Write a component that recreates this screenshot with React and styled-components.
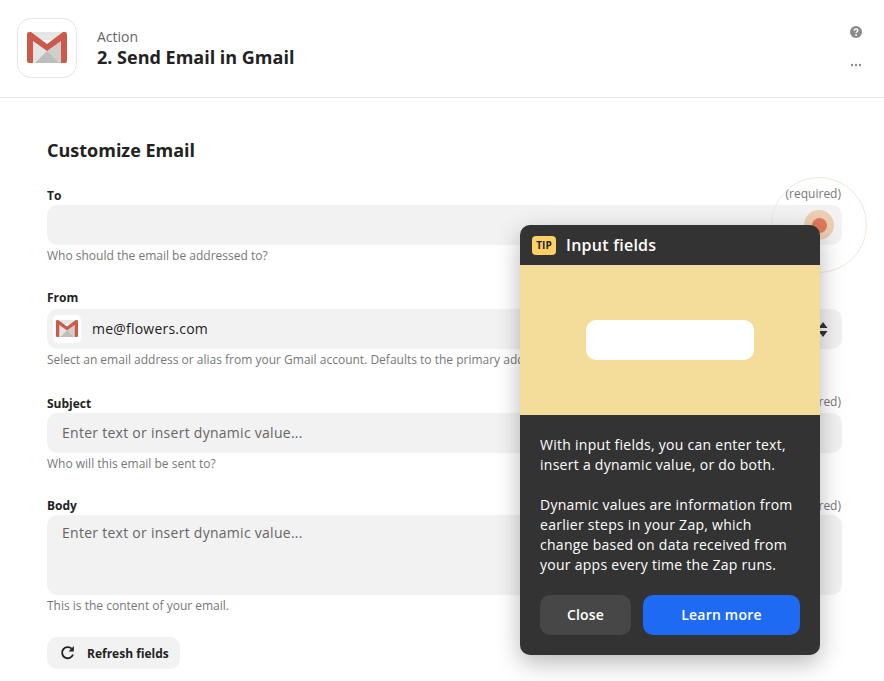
import React from "react";
import styled, { createGlobalStyle } from "styled-components";

const GlobalStyle = createGlobalStyle`
  html, body {
    margin: 0;
    padding: 0;
    background: #fff;
    font-family: "Open Sans", "Liberation Sans", sans-serif;
    overflow: hidden;
  }
`;

const Page = styled.div`
  position: relative;
  width: 884px;
  height: 681px;
  overflow: hidden;
  background: #fff;
`;

const Header = styled.header`
  display: flex;
  align-items: center;
  height: 98px;
  padding: 0 22px 2px 17px;
  box-sizing: border-box;
  border-bottom: 1px solid #e3e3e3;
`;

const AppIcon = styled.div`
  display: flex;
  align-items: center;
  justify-content: center;
  width: ${(p) => p.$size}px;
  height: ${(p) => p.$size}px;
  flex: none;
  box-sizing: border-box;
  background: #fff;
  border: 1px solid ${(p) => (p.$plain ? "#f3f3f3" : "#e6e6e6")};
  border-radius: ${(p) => p.$radius}px;
`;

const HeaderText = styled.div`
  display: flex;
  flex-direction: column;
  margin: -2px 0 0 20px;
  flex: 1;
`;

const Kicker = styled.div`
  font-size: 14px;
  line-height: 20px;
  color: #666;
`;

const StepTitle = styled.div`
  font-size: 18px;
  line-height: 20px;
  font-weight: 700;
  color: #222;
`;

const HeaderActions = styled.div`
  display: flex;
  flex-direction: column;
  align-items: center;
  gap: 25px;
  margin-top: -3px;
`;

const Form = styled.main`
  display: flex;
  flex-direction: column;
  padding: 40px 42px 0 47px;
`;

const SectionTitle = styled.h2`
  margin: 0 0 25px;
  font-size: 18px;
  line-height: 24px;
  font-weight: 700;
  color: #222;
`;

const Field = styled.div`
  display: flex;
  flex-direction: column;
  margin-bottom: ${(p) => p.$gap}px;
`;

const LabelRow = styled.div`
  display: flex;
  justify-content: space-between;
  align-items: center;
  height: 18px;
  margin-bottom: ${(p) => p.$gap || 0}px;
`;

const Label = styled.label`
  font-size: 12px;
  line-height: 18px;
  font-weight: 700;
  color: #222;
`;

const Required = styled.span`
  margin: ${(p) => (p.$low ? "-1px" : "-4px")} 1px 0 0;
  font-size: 12px;
  line-height: 18px;
  color: #777;
`;

const Input = styled.div`
  display: flex;
  align-items: ${(p) => (p.$tall ? "flex-start" : "center")};
  justify-content: space-between;
  box-sizing: border-box;
  height: ${(p) => (p.$tall ? 80 : 40)}px;
  padding: ${(p) => (p.$tall ? "8px 15px" : "0 15px")};
  padding-left: ${(p) => (p.$select ? 5 : 15)}px;
  padding-right: ${(p) => (p.$select ? 14 : 15)}px;
  background: #f2f2f2;
  border-radius: 10px;
`;

const Placeholder = styled.span`
  font-size: 14px;
  line-height: 20px;
  letter-spacing: 0.27px;
  color: #666;
`;

const SelectValue = styled.div`
  display: flex;
  align-items: center;
  gap: 10px;
  font-size: 14px;
  line-height: 20px;
  letter-spacing: 0.22px;
  color: #222;
`;

const Help = styled.div`
  margin-top: 2px;
  font-size: 12px;
  line-height: 18px;
  color: #777;
`;

const RefreshButton = styled.button`
  display: flex;
  align-items: center;
  gap: 11px;
  width: 133px;
  height: 32px;
  padding: 0 0 0 13px;
  border: 0;
  border-radius: 10px;
  background: #f2f2f2;
  font-family: inherit;
  font-size: 12px;
  font-weight: 700;
  color: #222;
`;

const Pulse = styled.div`
  position: absolute;
  left: 771px;
  top: 177px;
  width: 96px;
  height: 96px;
  box-sizing: border-box;
  border: 1px solid #f3e6dc;
  border-radius: 50%;
`;

const PulseRing = styled.div`
  position: absolute;
  left: 32px;
  top: 32px;
  width: 30px;
  height: 30px;
  border-radius: 50%;
  background: #ebceb4;
`;

const PulseDot = styled.div`
  position: absolute;
  left: 8px;
  top: 8px;
  width: 15px;
  height: 15px;
  border-radius: 50%;
  background: #e07a59;
`;

const Popup = styled.aside`
  position: absolute;
  left: 520px;
  top: 225px;
  width: 300px;
  height: 430px;
  display: flex;
  flex-direction: column;
  border-radius: 10px;
  background: #333;
  color: #fff;
  overflow: hidden;
  box-shadow: 0 8px 24px rgba(0, 0, 0, 0.28);
`;

const PopupHeader = styled.div`
  display: flex;
  align-items: center;
  gap: 10px;
  height: 40px;
  padding: 0 12px;
  flex: none;
`;

const TipBadge = styled.span`
  display: flex;
  align-items: center;
  justify-content: center;
  width: 24px;
  height: 19px;
  border-radius: 4px;
  background: #ffcf67;
  color: #222;
  font-size: 10px;
  font-weight: 700;
`;

const PopupTitle = styled.div`
  font-size: 16px;
  line-height: 20px;
  font-weight: 600;
  letter-spacing: 0.25px;
  color: #fff;
`;

const Illustration = styled.div`
  display: flex;
  align-items: center;
  justify-content: center;
  height: 150px;
  flex: none;
  background: #f4dc9a;
`;

const FakeInput = styled.div`
  width: 168px;
  height: 40px;
  border-radius: 10px;
  background: #fff;
`;

const PopupBody = styled.div`
  display: flex;
  flex-direction: column;
  gap: 20px;
  padding: 20px 20px 0;
  font-size: 14px;
  line-height: 20px;
  letter-spacing: 0.27px;
  color: #fff;
`;

const Paragraph = styled.p`
  margin: 0;
`;

const PopupActions = styled.div`
  display: flex;
  gap: 12px;
  padding: 20px 20px 0;
`;

const PopupButton = styled.button`
  display: flex;
  align-items: center;
  justify-content: center;
  height: 40px;
  width: ${(p) => (p.$primary ? 157 : 91)}px;
  padding: 0 0 2px;
  border: 0;
  border-radius: 10px;
  background: ${(p) => (p.$primary ? "#1f6af2" : "#474747")};
  color: #fff;
  font-family: inherit;
  font-size: 14px;
  font-weight: 600;
  letter-spacing: 0.2px;
`;

const GmailLogo = ({ width }) => (
  <svg width={width} height={width * 0.775} viewBox="0 0 40 31" aria-hidden="true">
    <rect x="3" y="0" width="34" height="8" fill="#e6e6e4" />
    <path d="M6 9 L20 19 L20 31 L6 31 Z" fill="#e4e4e2" />
    <path d="M20 19 L34 9 L34 31 L20 31 Z" fill="#cfcfcd" />
    <path d="M8 31 L20 19 L32 31 Z" fill="#bdbdbb" />
    <path
      d="M0 2 Q0 0 2 0 L4 0 L20 12 L36 0 L38 0 Q40 0 40 2 L40 29 Q40 31 38 31 L34 31 L34 9 L20 19 L6 9 L6 31 L2 31 Q0 31 0 29 Z"
      fill="#cc5a4b"
    />
  </svg>
);

const HelpIcon = () => (
  <svg width="12" height="12" viewBox="0 0 13 13" aria-hidden="true">
    <circle cx="6.5" cy="6.5" r="6.5" fill="#8a8a8a" />
    <path
      d="M4.5 5.1 C4.5 3.9 5.4 3.3 6.5 3.3 C7.6 3.3 8.5 3.9 8.5 5 C8.5 6.3 6.6 6.2 6.6 7.6"
      fill="none"
      stroke="#fff"
      strokeWidth="1.5"
    />
    <circle cx="6.6" cy="9.7" r="1" fill="#fff" />
  </svg>
);

const DotsIcon = () => (
  <svg width="12" height="4" viewBox="0 0 12 4" aria-hidden="true">
    <circle cx="2" cy="2" r="1.2" fill="#8a8a8a" />
    <circle cx="6" cy="2" r="1.2" fill="#8a8a8a" />
    <circle cx="10" cy="2" r="1.2" fill="#8a8a8a" />
  </svg>
);

const SortIcon = () => (
  <svg width="10" height="15" viewBox="0 0 10 15" aria-hidden="true">
    <path d="M5 0 L9.5 6 L0.5 6 Z" fill="#333" />
    <path d="M5 15 L9.5 9 L0.5 9 Z" fill="#333" />
  </svg>
);

const RefreshIcon = () => (
  <svg width="16" height="16" viewBox="0 0 16 16" aria-hidden="true">
    <path
      d="M13 9.5 A5.6 5.6 0 1 1 11.6 3.6"
      fill="none"
      stroke="#222"
      strokeWidth="1.8"
    />
    <path d="M13.8 1 L13.8 6.4 L8.6 6.4 Z" fill="#222" />
  </svg>
);

export default function App() {
  return (
    <Page>
      <GlobalStyle />
      <Header>
        <AppIcon $size={60} $radius={14}>
          <GmailLogo width={40} />
        </AppIcon>
        <HeaderText>
          <Kicker>Action</Kicker>
          <StepTitle>2. Send Email in Gmail</StepTitle>
        </HeaderText>
        <HeaderActions>
          <HelpIcon />
          <DotsIcon />
        </HeaderActions>
      </Header>

      <Form>
        <SectionTitle>Customize Email</SectionTitle>

        <Field $gap={24}>
          <LabelRow>
            <Label>To</Label>
            <Required>(required)</Required>
          </LabelRow>
          <Input />
          <Help>Who should the email be addressed to?</Help>
        </Field>

        <Field $gap={26}>
          <LabelRow $gap={2}>
            <Label>From</Label>
          </LabelRow>
          <Input $select>
            <SelectValue>
              <AppIcon $size={30} $radius={6} $plain>
                <GmailLogo width={22} />
              </AppIcon>
              me@flowers.com
            </SelectValue>
            <SortIcon />
          </Input>
          <Help>Select an email address or alias from your Gmail account. Defaults to the primary address.</Help>
        </Field>

        <Field $gap={24}>
          <LabelRow>
            <Label>Subject</Label>
            <Required>(required)</Required>
          </LabelRow>
          <Input>
            <Placeholder>Enter text or insert dynamic value...</Placeholder>
          </Input>
          <Help>Who will this email be sent to?</Help>
        </Field>

        <Field $gap={22}>
          <LabelRow>
            <Label>Body</Label>
            <Required $low>(required)</Required>
          </LabelRow>
          <Input $tall>
            <Placeholder>Enter text or insert dynamic value...</Placeholder>
          </Input>
          <Help>This is the content of your email.</Help>
        </Field>

        <RefreshButton>
          <RefreshIcon />
          Refresh fields
        </RefreshButton>
      </Form>

      <Pulse>
        <PulseRing>
          <PulseDot />
        </PulseRing>
      </Pulse>
      <Popup>
        <PopupHeader>
          <TipBadge>TIP</TipBadge>
          <PopupTitle>Input fields</PopupTitle>
        </PopupHeader>
        <Illustration>
          <FakeInput />
        </Illustration>
        <PopupBody>
          <Paragraph>With input fields, you can enter text, insert a dynamic value, or do both.</Paragraph>
          <Paragraph>
            Dynamic values are information from earlier steps in your Zap, which change based on data received from
            your apps every time the Zap runs.
          </Paragraph>
        </PopupBody>
        <PopupActions>
          <PopupButton>Close</PopupButton>
          <PopupButton $primary>Learn more</PopupButton>
        </PopupActions>
      </Popup>
    </Page>
  );
}
